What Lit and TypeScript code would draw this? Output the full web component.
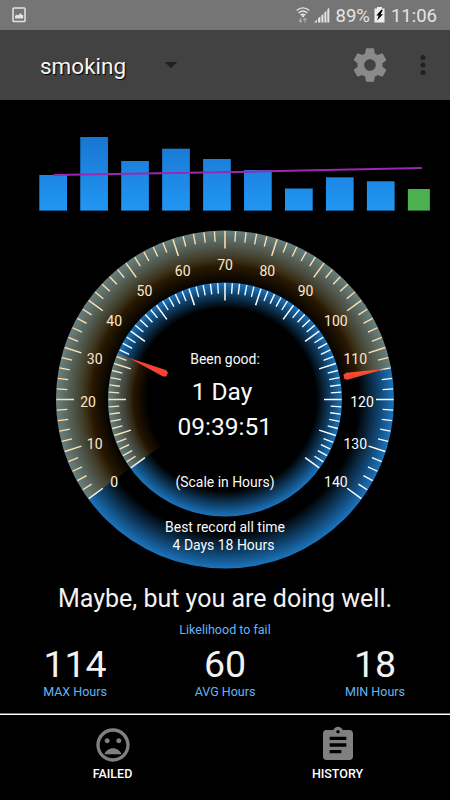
import { LitElement, html, svg, css } from "lit";
import { customElement, property } from "lit/decorators.js";

const CX = 225;
const CY = 179.5;
const rad = (units: number) => ((180 - (units - 20) * 1.8) * Math.PI) / 180;
const point = (units: number, r: number): [number, number] => [
  CX + r * Math.cos(rad(units)),
  CY - r * Math.sin(rad(units)),
];

@customElement("status-bar")
class StatusBar extends LitElement {
  static styles = css`
    :host { display: flex; align-items: center; height: 30px; background: #757575; color: #e4e4e4; }
    .picture { margin-left: 12px; }
    .right { margin-left: auto; display: flex; align-items: center; height: 30px; padding-right: 13px; font-size: 18.5px; line-height: 30px; }
    svg { display: block; flex: none; }
    .wifi { margin-right: 4px; }
    .signal { margin-right: 6px; }
    .battery { margin: 0 6px 0 4px; }
    .percent, .time { padding-top: 1px; }
  `;
  render() {
    return html`
      <svg class="picture" width="14" height="16" viewBox="0 0 14 16">
        <rect x="1" y="1" width="12" height="13.5" rx="0.8" fill="none" stroke="#e4e4e4" stroke-width="1.5" />
        <path d="M3 11.5V9l1.5-1.4L6 8.500l2.500-2.500 1.500 2L11.200 8v3.500z" fill="#e4e4e4" />
      </svg>
      <div class="right">
        <svg class="wifi" width="14" height="16" viewBox="0 0 14 16" fill="none" stroke="#e4e4e4" stroke-width="1.400">
          <path d="M.6 3.500Q7-1.800 13.400 3.500M2.600 6Q7 2.200 11.400 6M4.600 8.300Q7 6.200 9.400 8.300" />
          <circle cx="7" cy="9.200" r="1.100" fill="#e4e4e4" stroke="none" />
          <path d="M4.500 11v4M2.900 13.300 4.500 15l1.600-1.700M9 15.500v-4M7.400 13 9 11.300l1.600 1.700" stroke="#aaa" stroke-width="1.200" />
        </svg>
        <svg class="signal" width="16" height="16" viewBox="0 0 16 16" fill="#e4e4e4">
          <path d="M0 15.500l3-2.800v2.800zM4 11.500l2.400-2.200v6.200H4zM7.400 8.500l2-1.800v8.800h-2zM10.400 5.500l2-1.800v11.800h-2zM13.300 2.500l2-2v15h-2z" />
        </svg>
        <span class="percent">89%</span>
        <svg class="battery" width="11" height="16" viewBox="0 0 11 16">
          <path d="M3 0h5v1.500h2.500V15.500H.5V1.500H3z" fill="#f0f0f0" />
          <path d="M7.500 2.500 2.300 8.500h2.400L3 13.500 9 7.200H6.600L8.800 3z" fill="#000" />
        </svg>
        <span class="time">11:06</span>
      </div>
    `;
  }
}

@customElement("tool-bar")
class ToolBar extends LitElement {
  static styles = css`
    :host { display: flex; align-items: center; height: 70px; background: #424242; }
    .title { width: 116px; margin-left: 40px; padding-top: 1px; color: #f5f5f5; font-size: 22.5px; line-height: 30px; text-shadow: 1px 1px 1px #000; }
    svg { display: block; }
    .gear { margin-left: auto; }
    .more { margin: 0 12.500px 0 17.500px; }
  `;
  render() {
    return html`
      <span class="title">smoking</span>
      <svg width="30" height="30" viewBox="0 0 24 24" fill="#202020"><path d="M7 9.500l5 5 5-5z" /></svg>
      <svg class="gear" width="40" height="40" viewBox="0 0 24 24" fill="#8a8a8a">
        <path d="M19.430 12.980c.04-.32.07-.64.07-.98s-.03-.66-.07-.98l2.110-1.650c.19-.15.24-.42.12-.64l-2-3.460c-.12-.22-.39-.3-.61-.22l-2.490 1c-.52-.4-1.080-.73-1.690-.98l-.38-2.650C14.460 2.180 14.250 2 14 2h-4c-.25 0-.46.18-.49.42l-.38 2.650c-.61.25-1.170.59-1.690.98l-2.490-1c-.23-.09-.49 0-.61.22l-2 3.460c-.13.22-.07.49.12.64l2.110 1.650c-.04.32-.07.65-.07.98s.03.66.07.98l-2.110 1.650c-.19.15-.24.42-.12.64l2 3.460c.12.22.39.3.61.22l2.490-1c.52.4 1.080.73 1.690.98l.38 2.650c.03.24.24.42.49.42h4c.25 0 .46-.18.49-.42l.38-2.650c.61-.25 1.170-.59 1.690-.98l2.490 1c.23.09.49 0 .61-.22l2-3.460c.12-.22.07-.49-.12-.64l-2.110-1.650zM12 15.500c-1.930 0-3.500-1.570-3.500-3.500s1.570-3.500 3.500-3.500 3.500 1.570 3.500 3.500-1.570 3.500-3.500 3.500z" />
      </svg>
      <svg class="more" width="30" height="30" viewBox="0 0 24 24" fill="#202020">
        <circle cx="12" cy="6" r="2" /><circle cx="12" cy="12" r="2" /><circle cx="12" cy="18" r="2" />
      </svg>
    `;
  }
}

@customElement("history-chart")
class HistoryChart extends LitElement {
  static styles = css`
    :host { display: block; height: 120px; }
    svg { display: block; }
  `;
  private tops = [75, 37, 61, 48.700, 59, 70, 88.500, 77.300, 81.300, 89];
  render() {
    return html`
      <svg width="450" height="120" viewBox="0 0 450 120">
        <defs>
          <linearGradient id="bar" gradientUnits="userSpaceOnUse" x1="0" y1="37" x2="0" y2="110">
            <stop offset="0" stop-color="#1976d2" /><stop offset="1" stop-color="#2196f3" />
          </linearGradient>
        </defs>
        ${this.tops.map((top, i) => {
          const last = i === this.tops.length - 1;
          return svg`<rect x=${39.300 + i * 40.950} y=${top} width=${last ? 22 : 27.700} height=${110.600 - top} fill=${last ? "#4caf50" : "url(#bar)"} />`;
        })}
        <path d="M53.500 74.900C140 73.500 200 72.500 250 71.700S360 69.300 421.800 67.900" fill="none" stroke="#9c27b0" stroke-width="2" />
      </svg>
    `;
  }
}

@customElement("streak-gauge")
class StreakGauge extends LitElement {
  static styles = css`
    :host { display: block; height: 360px; }
    svg { display: block; }
    text { fill: #fafafa; text-anchor: middle; font-family: Roboto, "Liberation Sans", sans-serif; }
    .scale { font-size: 14px; }
    .note { font-size: 13.950px; }
    .big { font-size: 24.500px; }
  `;
  @property({ type: Number }) best = 114;
  @property({ type: Number }) current = 33;

  private ticks(r: number) {
    return Array.from({ length: 71 }, (_, i) => {
      const major = i % 5 === 0;
      const [x1, y1] = point(i * 2, r);
      const [x2, y2] = point(i * 2, r - (major ? 17.500 : 10.500));
      return svg`<line x1=${x1} y1=${y1} x2=${x2} y2=${y2} stroke="#fff" stroke-width=${major ? 1.500 : 1.350} />`;
    });
  }

  private sector(r: number, value: number, fill: string) {
    const [x1, y1] = point(0, r);
    const [x2, y2] = point(value, r);
    const large = value > 100 ? 1 : 0;
    return svg`<path d="M${CX} ${CY}L${x1} ${y1}A${r} ${r} 0 ${large} 1 ${x2} ${y2}Z" fill=${fill} />`;
  }

  private needle(tip: number, value: number) {
    const turn = (value - 20) * 1.8 - 180;
    return svg`<path transform="translate(${CX} ${CY}) rotate(${turn})"
      d="M${tip} 0L${tip - 39} -3.500L${tip - 42} -2.200V2.200L${tip - 39} 3.500Z" fill="#f44336" />`;
  }

  render() {
    const labels = Array.from({ length: 15 }, (_, i) => i * 10);
    return html`
      <svg width="450" height="360" viewBox="0 0 450 360">
        <defs>
          <radialGradient id="blueOuter" gradientUnits="userSpaceOnUse" cx=${CX} cy=${CY} r="169">
            <stop offset="0.790" stop-color="#000" /><stop offset="1" stop-color="#1b74bd" />
          </radialGradient>
          <radialGradient id="blueInner" gradientUnits="userSpaceOnUse" cx=${CX} cy=${CY} r="117">
            <stop offset="0.780" stop-color="#000" /><stop offset="1" stop-color="#1b74bd" />
          </radialGradient>
          <radialGradient id="tintOuter" gradientUnits="userSpaceOnUse" cx=${CX} cy=${CY} r="169">
            <stop offset="0.680" stop-color="#ff9800" stop-opacity="0" /><stop offset="0.830" stop-color="#ff9800" stop-opacity="0.220" /><stop offset="1" stop-color="#ff9800" stop-opacity="0.340" />
          </radialGradient>
          <radialGradient id="tintInner" gradientUnits="userSpaceOnUse" cx=${CX} cy=${CY} r="117">
            <stop offset="0.660" stop-color="#ff9800" stop-opacity="0" /><stop offset="0.820" stop-color="#ff9800" stop-opacity="0.190" /><stop offset="1" stop-color="#ff9800" stop-opacity="0.330" />
          </radialGradient>
        </defs>
        <circle cx=${CX} cy=${CY} r="169" fill="url(#blueOuter)" />
        ${this.ticks(168.500)}
        ${labels.map((n) => {
          const [x, y] = point(n, 137);
          return svg`<text class="scale" x=${x} y=${y + 7}>${n}</text>`;
        })}
        ${this.needle(163, this.best)}
        ${this.sector(169, this.best, "url(#tintOuter)")}
        <circle cx=${CX} cy=${CY} r="117" fill="url(#blueInner)" />
        ${this.ticks(116.500)}
        ${this.sector(117, this.current, "url(#tintInner)")}
        ${this.needle(105, this.current)}
        <text class="note" x="225" y="144.300">Been good:</text>
        <text class="big" x="222" y="180">1 Day</text>
        <text class="big" x="224.800" y="215">09:39:51</text>
        <text class="note" x="225" y="267.300">(Scale in Hours)</text>
        <text class="note" x="225" y="312.300">Best record all time</text>
        <text class="note" x="223.500" y="329.700">4 Days 18 Hours</text>
      </svg>
    `;
  }
}

@customElement("stat-summary")
class StatSummary extends LitElement {
  static styles = css`
    :host { display: flex; flex-direction: column; height: 103px; flex: none; color: #f2f2f2; text-align: center; }
    :host { height: 133px; }
    .message { font-size: 25px; line-height: 30px; margin-top: 4px; }
    .caption { font-size: 12.500px; line-height: 15px; color: #64b5f6; }
    .likelihood { margin-top: 8px; }
    .stats { display: grid; grid-template-columns: repeat(3, 1fr); margin-top: 7px; }
    .value { font-size: 37.500px; line-height: 40px; }
    .rule { margin-top: auto; height: 1px; background: #555; }
    .rule.bright { margin-top: 0; background: #fff; }
  `;
  private stats = [
    ["114", "MAX Hours"],
    ["60", "AVG Hours"],
    ["18", "MIN Hours"],
  ];
  render() {
    return html`
      <div class="message">Maybe, but you are doing well.</div>
      <div class="caption likelihood">Likelihood to fail</div>
      <div class="stats">
        ${this.stats.map(([value, name]) => html`<div><div class="value">${value}</div><div class="caption">${name}</div></div>`)}
      </div>
    `;
  }
}

@customElement("bottom-nav")
class BottomNav extends LitElement {
  static styles = css`
    :host { display: grid; grid-template-columns: 1fr 1fr; flex: 1; color: #fff; border-top: 1px solid #777; box-shadow: inset 0 1px #fff; }
    .item { display: flex; flex-direction: column; align-items: center; padding-top: 11px; font-size: 12.500px; line-height: 16px; font-weight: 500; }
    svg { display: block; margin-bottom: 1px; }
  `;
  render() {
    return html`
      <div class="item">
        <svg width="40" height="40" viewBox="0 0 24 24" fill="#808080">
          <path d="M11.990 2C6.470 2 2 6.480 2 12s4.470 10 9.990 10C17.520 22 22 17.520 22 12S17.520 2 11.990 2zM12 20c-4.420 0-8-3.580-8-8s3.580-8 8-8 8 3.580 8 8-3.580 8-8 8zm3.500-9c.83 0 1.500-.67 1.500-1.500S16.330 8 15.500 8 14 8.670 14 9.500s.67 1.500 1.500 1.500zm-7 0c.83 0 1.500-.67 1.500-1.500S9.330 8 8.500 8 7 8.670 7 9.500 7.670 11 8.500 11zm3.500 3c-2.330 0-4.310 1.460-5.110 3.500h10.220c-.8-2.040-2.780-3.500-5.110-3.500z" />
        </svg>
        FAILED
      </div>
      <div class="item">
        <svg width="40" height="40" viewBox="0 0 24 24" fill="#808080">
          <path d="M19 3h-4.180C14.400 1.840 13.300 1 12 1c-1.300 0-2.400.84-2.820 2H5c-1.100 0-2 .9-2 2v14c0 1.100.9 2 2 2h14c1.100 0 2-.9 2-2V5c0-1.100-.9-2-2-2zm-7 0c.55 0 1 .45 1 1s-.45 1-1 1-1-.45-1-1 .45-1 1-1zm2 14H7v-2h7v2zm3-4H7v-2h10v2zm0-4H7V7h10v2z" />
        </svg>
        HISTORY
      </div>
    `;
  }
}

@customElement("app-root")
class AppRoot extends LitElement {
  static styles = css`
    :host { display: flex; flex-direction: column; width: 450px; height: 800px; overflow: hidden; background: #000; font-family: Roboto, "Liberation Sans", sans-serif; }
  `;
  render() {
    return html`
      <status-bar></status-bar>
      <tool-bar></tool-bar>
      <history-chart></history-chart>
      <streak-gauge></streak-gauge>
      <stat-summary></stat-summary>
      <bottom-nav></bottom-nav>
    `;
  }
}
